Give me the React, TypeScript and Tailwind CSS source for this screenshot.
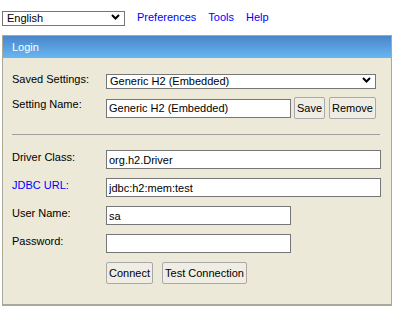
import React from "react";

function Chevron({ className }: { className: string }) {
  return (
    <svg
      className={className}
      width="9"
      height="6"
      viewBox="0 0 9 6"
      fill="none"
      stroke="#000"
      strokeWidth="2"
    >
      <polyline points="1,1 4.5,4.5 8,1" />
    </svg>
  );
}

function Field({ value, width }: { value: string; width: string }) {
  return (
    <input
      readOnly
      value={value}
      className={`${width} h-[19px] border border-[#767676] bg-white pl-[2px] text-[11px] text-black outline-none`}
    />
  );
}

function Btn({ label, width }: { label: string; width: string }) {
  return (
    <button className={`${width} h-[22px] rounded-[2px] border border-[#a9a9a9] bg-[#efede4] text-[11px] text-black`}>
      {label}
    </button>
  );
}

export default function App() {
  return (
    <div className="w-[399px] h-[312px] bg-white pl-[2px] pt-[10px] font-['Liberation_Sans',Arial,sans-serif] text-[11px] text-black">
      <div className="flex h-[15px] items-center gap-3">
        <div className="relative h-[15px] w-[123px]">
          <select className="h-[15px] w-full appearance-none border border-[#767676] bg-white pl-[4px] text-[11px] leading-[13px] text-black outline-none">
            <option>English</option>
          </select>
          <Chevron className="pointer-events-none absolute right-[5px] top-[4px]" />
        </div>
        <a className="text-[#0000ff]">Preferences</a>
        <a className="text-[#0000ff]">Tools</a>
        <a className="text-[#0000ff]">Help</a>
      </div>

      <div className="mt-[10px] w-[390px] border border-b-2 border-[#aca899] bg-[#ece9d8]">
        <div className="flex h-[22px] items-center bg-gradient-to-b from-[#4a86c9] to-[#68b7f2] pl-[9px] text-white">
          Login
        </div>

        <div className="pb-[20px] pl-[9px]">
          <div className="mt-[15px] flex h-[15px] items-start">
            <div className="w-[94px] shrink-0 leading-[13px]">Saved Settings:</div>
            <div className="relative h-[15px] w-[270px]">
              <select className="h-[15px] w-full appearance-none border border-[#767676] bg-white pl-[3px] text-[11px] leading-[13px] text-black outline-none">
                <option>Generic H2 (Embedded)</option>
              </select>
              <Chevron className="pointer-events-none absolute right-[5px] top-[4px]" />
            </div>
          </div>

          <div className="mt-[9px] flex h-[22px] items-center">
            <div className="w-[94px] shrink-0 self-start pt-[1px] leading-[13px]">Setting Name:</div>
            <Field value="Generic H2 (Embedded)" width="w-[185px]" />
            <div className="ml-[3px] flex gap-[4px]">
              <Btn label="Save" width="w-[31px]" />
              <Btn label="Remove" width="w-[47px]" />
            </div>
          </div>

          <div className="mt-[15px] h-px w-[368px] bg-[#a0a0a0]" />

          <div className="mt-[15px] flex items-start">
            <div className="w-[94px] shrink-0 pt-[1px] leading-[13px]">Driver Class:</div>
            <Field value="org.h2.Driver" width="w-[275px]" />
          </div>
          <div className="mt-[9px] flex items-start">
            <div className="w-[94px] shrink-0 pt-[1px] leading-[13px] text-[#0000ff]">JDBC URL:</div>
            <Field value="jdbc:h2:mem:test" width="w-[275px]" />
          </div>
          <div className="mt-[9px] flex items-start">
            <div className="w-[94px] shrink-0 pt-[1px] leading-[13px]">User Name:</div>
            <Field value="sa" width="w-[185px]" />
          </div>
          <div className="mt-[9px] flex items-start">
            <div className="w-[94px] shrink-0 pt-[1px] leading-[13px]">Password:</div>
            <Field value="" width="w-[185px]" />
          </div>

          <div className="ml-[94px] mt-[9px] flex gap-[9px]">
            <Btn label="Connect" width="w-[47px]" />
            <Btn label="Test Connection" width="w-[85px]" />
          </div>
        </div>
      </div>
    </div>
  );
}
